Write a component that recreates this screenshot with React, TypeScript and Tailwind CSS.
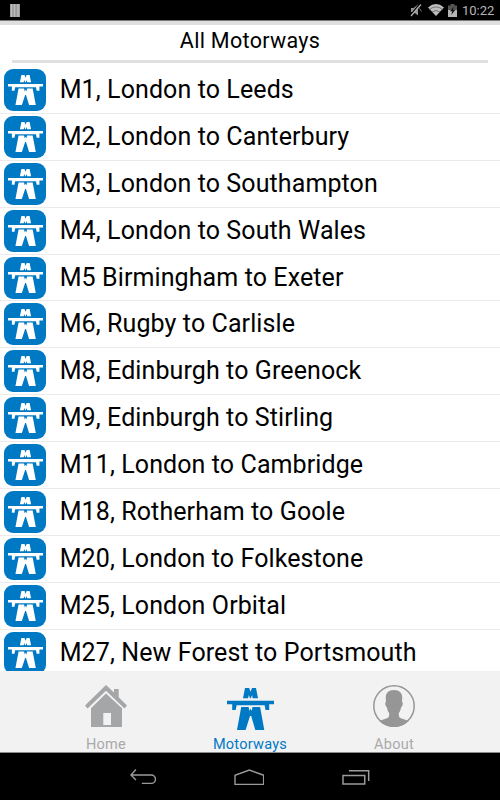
import React from "react";

const motorways = [
  "M1, London to Leeds",
  "M2, London to Canterbury",
  "M3, London to Southampton",
  "M4, London to South Wales",
  "M5 Birmingham to Exeter",
  "M6, Rugby to Carlisle",
  "M8, Edinburgh to Greenock",
  "M9, Edinburgh to Stirling",
  "M11, London to Cambridge",
  "M18, Rotherham to Goole",
  "M20, London to Folkestone",
  "M25, London Orbital",
  "M27, New Forest to Portsmouth",
];

function MotorwayGlyph({ className }: { className: string }) {
  return (
    <svg viewBox="0 0 47 42" className={className} fill="currentColor" preserveAspectRatio="none">
      <path d="M18 0h4.200l1.300 3.800L25 0h4l2 10.300h-5.400l-.5-3.300-1.300 3.300h-.8l-1.200-3.300-.7 3.300H16z" />
      <path d="M0 12.700h47v3.500h-4.800v5.800h-3.700l-.9-4.800H9.600L8.700 22H5.200v-5.800H0z" />
      <path d="M14.200 19h7.400l.9 4 1.100-2.500L24.700 23l.8-4h7.600L37.300 42h-9l-4.100-14h-1.200l-4.400 14H10z" />
    </svg>
  );
}

function StatusBar() {
  return (
    <header className="flex h-5 shrink-0 items-center bg-black pl-[10px] pr-[5px] text-[#b5b5b5]">
      <svg width="10" height="13" viewBox="0 0 10 13">
        <path d="M0 0h10v13H0z" fill="#999" />
        <path d="M1.500 0v13M4.500 0v13M8 0v13" stroke="#bdbdbd" strokeWidth="1.400" />
      </svg>
      <div className="ml-auto flex items-center">
        <svg width="12" height="14" viewBox="0 0 12 14" className="mr-[6px]">
          <path d="M1 5h2.500L8 1.500v11L3.500 9H1z" fill="#959595" />
          <path d="M9.500 5.500l2 3" stroke="#777" />
          <path d="M.5 12L10 .5" stroke="#000" strokeWidth="1.200" />
          <path d="M1 13L11 1.500" stroke="#aaa" strokeWidth="1.300" />
        </svg>
        <svg width="16" height="12" viewBox="0 0 16 12" className="mr-[4px]">
          <path d="M0 3.400Q8-3.400 16 3.400L8 12z" fill="#bdbdbd" />
          <path d="M1.500 5.400Q8 .4 14.500 5.400M4 8Q8 5 12 8" fill="none" stroke="#555" strokeWidth=".7" />
        </svg>
        <svg width="9" height="13" viewBox="0 0 9 13" className="mr-[5px]">
          <path d="M0 1.500h2.500V0h4v1.500H9V6H0z" fill="#555" />
          <path d="M0 6h9v7H0z" fill="#b5b5b5" />
          <path d="M6 2.500L2 7.200h2.300L3.200 11l4-5H4.800z" fill="#111" />
        </svg>
        <span className="w-[33px] whitespace-nowrap pt-[2px] text-[13px] leading-[18px]">10:22</span>
      </div>
    </header>
  );
}

export default function App() {
  return (
    <div className="flex h-[800px] w-[500px] flex-col overflow-hidden bg-white font-['Roboto','Noto_Sans',sans-serif] text-black">
      <StatusBar />
      <div className="h-[5px] shrink-0 border-t border-[#777] bg-[#dfdfdf]" />
      <div className="mx-3 h-[38px] shrink-0 border-b-[3px] border-[#e0e0e0] text-center text-[21.5px] leading-[32px] tracking-[0.3px]">
        All Motorways
      </div>
      <main className="h-[608px] shrink-0 overflow-hidden pt-[4px]">
        {motorways.map((name) => (
          <div key={name} className="flex h-[46.9px] items-center border-b border-[#ebebeb] pl-[4.3px]">
            <div className="flex h-[42px] w-[42px] shrink-0 justify-center rounded-[9px] bg-[#0079c5] pt-[6px] text-white">
              <MotorwayGlyph className="h-[30px] w-[35px]" />
            </div>
            <span className="whitespace-nowrap pl-[13.4px] text-[25px] leading-[30px] tracking-[0.1px]">{name}</span>
          </div>
        ))}
      </main>
      <nav className="flex h-[82px] shrink-0 justify-center border-b border-[#8c8c8c] bg-[#f2f2f2] text-center text-[14.500px] leading-[18px] tracking-[0.250px] text-[#a9a9a9]">
        <div className="flex w-[144px] flex-col items-center pt-[14px]">
          <svg width="42" height="42" viewBox="0 0 42 42" className="shrink-0 text-[#a5a6a8]" fill="currentColor">
            <path d="M0 20.500L21 0l8 7.500V4h4.700v8.300l8.300 8.200-2.500 3L21 5.800 2.500 23.500z" />
            <path fillRule="evenodd" d="M6 23.200L21 8.600l16 14.600V42H6zM18.300 28v12h7.700V28z" />
          </svg>
          <span className="mt-[9px]">Home</span>
        </div>
        <div className="flex w-[144px] flex-col items-center pt-[17px] text-[#0079c5]">
          <MotorwayGlyph className="h-[42px] w-[47px] shrink-0" />
          <span className="mt-[6px]">Motorways</span>
        </div>
        <div className="flex w-[144px] flex-col items-center pt-[14px]">
          <svg width="42" height="42" viewBox="0 0 42 42" className="shrink-0 text-[#969696]">
            <circle cx="21" cy="21" r="20.200" fill="none" stroke="currentColor" strokeWidth="1.500" />
            <path fill="currentColor" d="M21 5c6 0 8.500 3.500 8.200 8.500l-.2 3.200c1.300 0 .8 5-.9 5.500-.4 3-1.600 4.800-2.300 5.800 0 4 .3 4.500 3 5.500l7 2.500A21 21 0 0 1 6.200 36l7-2.500c2.700-1 3-1.500 3-5.500-.7-1-1.900-2.800-2.300-5.800-1.700-.5-2.200-5.500-.9-5.500l-.2-3.200C12.500 8.500 15 5 21 5z" />
          </svg>
          <span className="mt-[9px]">About</span>
        </div>
      </nav>
      <footer className="flex h-[47px] shrink-0 items-start bg-black px-[130px] pt-[16px] text-[#9b9b9b]">
        <svg width="27" height="16" viewBox="0 0 27 16" fill="none" stroke="currentColor" strokeWidth="1.400">
          <path d="M6 .5L1 6L6 11M1 6h20.500a4.200 4.200 0 0 1 0 8.500H12" />
        </svg>
        <svg width="31" height="17" viewBox="0 0 31 17" className="ml-[77px]" fill="none" stroke="currentColor" strokeWidth="1.400">
          <path d="M1 15.500V6.200L15.500 1L30 6.200v9.300z" />
        </svg>
        <svg width="28" height="16" viewBox="0 0 28 16" className="ml-[78px]" fill="none" stroke="currentColor" strokeWidth="1.500">
          <path d="M1 6.500h22v8.500H1zM7 1.700h20V12" />
        </svg>
      </footer>
    </div>
  );
}
